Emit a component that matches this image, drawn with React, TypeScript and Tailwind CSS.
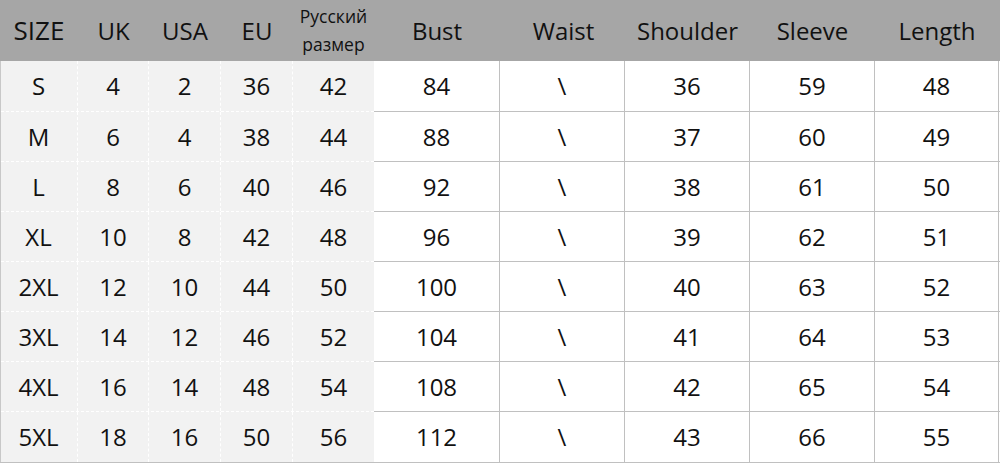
const rows = [
  ["S", "4", "2", "36", "42", "84", "\\", "36", "59", "48"],
  ["M", "6", "4", "38", "44", "88", "\\", "37", "60", "49"],
  ["L", "8", "6", "40", "46", "92", "\\", "38", "61", "50"],
  ["XL", "10", "8", "42", "48", "96", "\\", "39", "62", "51"],
  ["2XL", "12", "10", "44", "50", "100", "\\", "40", "63", "52"],
  ["3XL", "14", "12", "46", "52", "104", "\\", "41", "64", "53"],
  ["4XL", "16", "14", "48", "54", "108", "\\", "42", "65", "54"],
  ["5XL", "18", "16", "50", "56", "112", "\\", "43", "66", "55"],
];

const leftW = ["w-[78px]", "w-[71px]", "w-[72px]", "w-[72px]", "w-[81px]"];
const rightW = ["w-[126px]", "w-[125px]", "w-[125px]", "w-[125px]", "w-[124px]"];

export default function App() {
  return (
    <div
      className="w-[1000px] h-[463px] bg-white text-[#111] overflow-hidden"
      style={{ fontFamily: '"Open Sans", "Noto Sans", sans-serif' }}
    >
      {/* header */}
      <div className="flex h-[61px] bg-[#a6a6a6] text-[24px] items-center">
        <div className="w-[78px] text-center text-[26px]">SIZE</div>
        <div className="w-[71px] text-center">UK</div>
        <div className="w-[72px] text-center">USA</div>
        <div className="w-[72px] text-center">EU</div>
        <div className="w-[81px] flex flex-col items-center text-[17.5px] leading-[28px] pb-[2px]">
          <span>Русский</span>
          <span>размер</span>
        </div>
        <div className="w-[126px] text-center">Bust</div>
        <div className="w-[125px] text-center pl-[2px]">Waist</div>
        <div className="w-[125px] text-center">Shoulder</div>
        <div className="w-[125px] text-center">Sleeve</div>
        <div className="w-[124px] text-center">Length</div>
      </div>

      {/* body */}
      <div className="flex border-b border-[#c0c0c0] w-[1000px]">
        <div className="bg-[#f2f2f2] border-l border-[#c8c8c8] w-[374px]">
          {rows.map((r, i) => (
            <div
              key={i}
              className={`flex ${i === 0 ? "h-[51px]" : "h-[50px]"} ${
                i < rows.length - 1 ? "border-b border-dashed border-white" : ""
              }`}
            >
              {r.slice(0, 5).map((c, j) => (
                <div
                  key={j}
                  className={`${leftW[j]} flex items-center justify-center text-[24px] ${
                    j < 4 ? "border-r border-dashed border-white" : ""
                  } ${j === 0 ? "-ml-px" : ""}`}
                >
                  {c}
                </div>
              ))}
            </div>
          ))}
        </div>
        <div className="w-[626px]">
          {rows.map((r, i) => (
            <div
              key={i}
              className={`flex ${i === 0 ? "h-[51px]" : "h-[50px]"} ${
                i < rows.length - 1 ? "border-b border-[#c0c0c0]" : ""
              }`}
            >
              {r.slice(5).map((c, j) => (
                <div
                  key={j}
                  className={`${rightW[j]} flex items-center justify-center text-[24px] border-r border-[#c0c0c0]`}
                >
                  {c}
                </div>
              ))}
            </div>
          ))}
        </div>
      </div>
    </div>
  );
}
